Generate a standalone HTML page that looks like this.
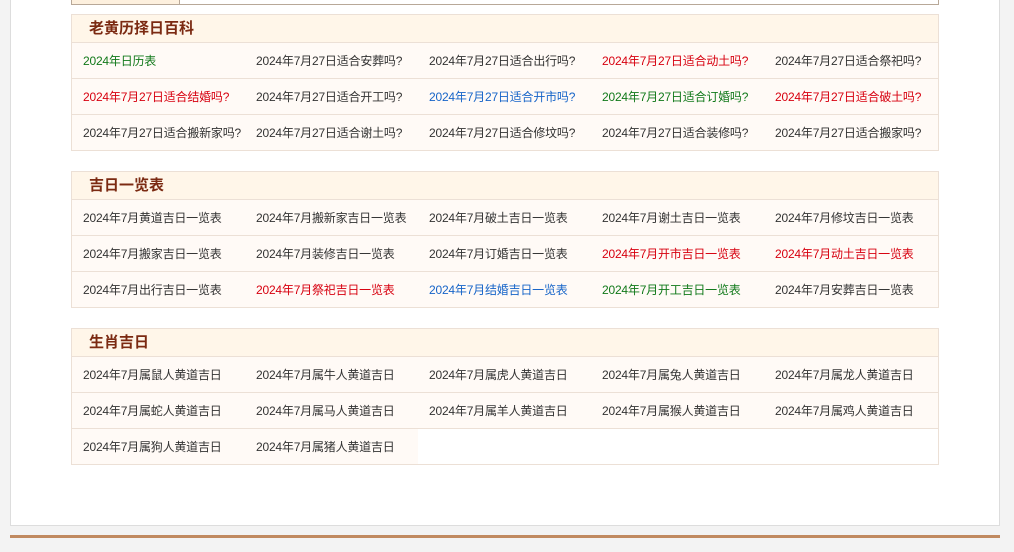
<!DOCTYPE html><html><head><meta charset="utf-8"><style>
body{margin:0;width:1014px;height:552px;background:#f3f3f3;position:relative;overflow:hidden;font-family:"Liberation Sans","Noto Sans CJK SC",sans-serif}
.panel{position:absolute;left:10px;top:-2px;width:988px;height:526px;background:#fff;border:1px solid #ddd}
.top{position:absolute;left:71px;top:-2px;width:866px;height:5px;border:1px solid #b8a898;background:#fff}
.top i{position:absolute;left:0;top:0;width:107px;height:5px;background:#fdf0de;border-right:1px solid #b8a898}
.sec{position:absolute;left:71px;width:866px;border:1px solid #ece0d6;background:#fff}
.h{height:27px;background:#fff6e9;border-bottom:1px solid #ece0d6;font-size:15px;font-weight:bold;color:#7b2a12;line-height:28px;padding-left:17px}
.r{display:flex;border-bottom:1px solid #ece0d6}
.r:last-child{border-bottom:none}
.r span{flex:none;width:162px;padding-left:11px;height:35px;line-height:36px;font-size:12px;color:#333;background:#fffaf6;white-space:nowrap;letter-spacing:-0.2px}
.r span:last-child{width:163px}
.g{color:#11791a!important}.d{color:#d7000f!important}.b{color:#1664c8!important}
.foot{position:absolute;left:10px;top:535px;width:990px;height:3px;background:#c08a60}
</style></head><body>
<div class="panel"></div>
<div class="top"><i></i></div>
<div class="sec" style="top:14px"><div class="h">老黄历择日百科</div>
<div class="r"><span class="g">2024年日历表</span><span>2024年7月27日适合安葬吗?</span><span>2024年7月27日适合出行吗?</span><span class="d">2024年7月27日适合动土吗?</span><span>2024年7月27日适合祭祀吗?</span></div>
<div class="r"><span class="d">2024年7月27日适合结婚吗?</span><span>2024年7月27日适合开工吗?</span><span class="b">2024年7月27日适合开市吗?</span><span class="g">2024年7月27日适合订婚吗?</span><span class="d">2024年7月27日适合破土吗?</span></div>
<div class="r"><span>2024年7月27日适合搬新家吗?</span><span>2024年7月27日适合谢土吗?</span><span>2024年7月27日适合修坟吗?</span><span>2024年7月27日适合装修吗?</span><span>2024年7月27日适合搬家吗?</span></div></div>
<div class="sec" style="top:171px"><div class="h">吉日一览表</div>
<div class="r"><span>2024年7月黄道吉日一览表</span><span>2024年7月搬新家吉日一览表</span><span>2024年7月破土吉日一览表</span><span>2024年7月谢土吉日一览表</span><span>2024年7月修坟吉日一览表</span></div>
<div class="r"><span>2024年7月搬家吉日一览表</span><span>2024年7月装修吉日一览表</span><span>2024年7月订婚吉日一览表</span><span class="d">2024年7月开市吉日一览表</span><span class="d">2024年7月动土吉日一览表</span></div>
<div class="r"><span>2024年7月出行吉日一览表</span><span class="d">2024年7月祭祀吉日一览表</span><span class="b">2024年7月结婚吉日一览表</span><span class="g">2024年7月开工吉日一览表</span><span>2024年7月安葬吉日一览表</span></div></div>
<div class="sec" style="top:328px"><div class="h">生肖吉日</div>
<div class="r"><span>2024年7月属鼠人黄道吉日</span><span>2024年7月属牛人黄道吉日</span><span>2024年7月属虎人黄道吉日</span><span>2024年7月属兔人黄道吉日</span><span>2024年7月属龙人黄道吉日</span></div>
<div class="r"><span>2024年7月属蛇人黄道吉日</span><span>2024年7月属马人黄道吉日</span><span>2024年7月属羊人黄道吉日</span><span>2024年7月属猴人黄道吉日</span><span>2024年7月属鸡人黄道吉日</span></div>
<div class="r"><span>2024年7月属狗人黄道吉日</span><span style="width:162px">2024年7月属猪人黄道吉日</span></div></div>
<div class="foot"></div>
</body></html>
